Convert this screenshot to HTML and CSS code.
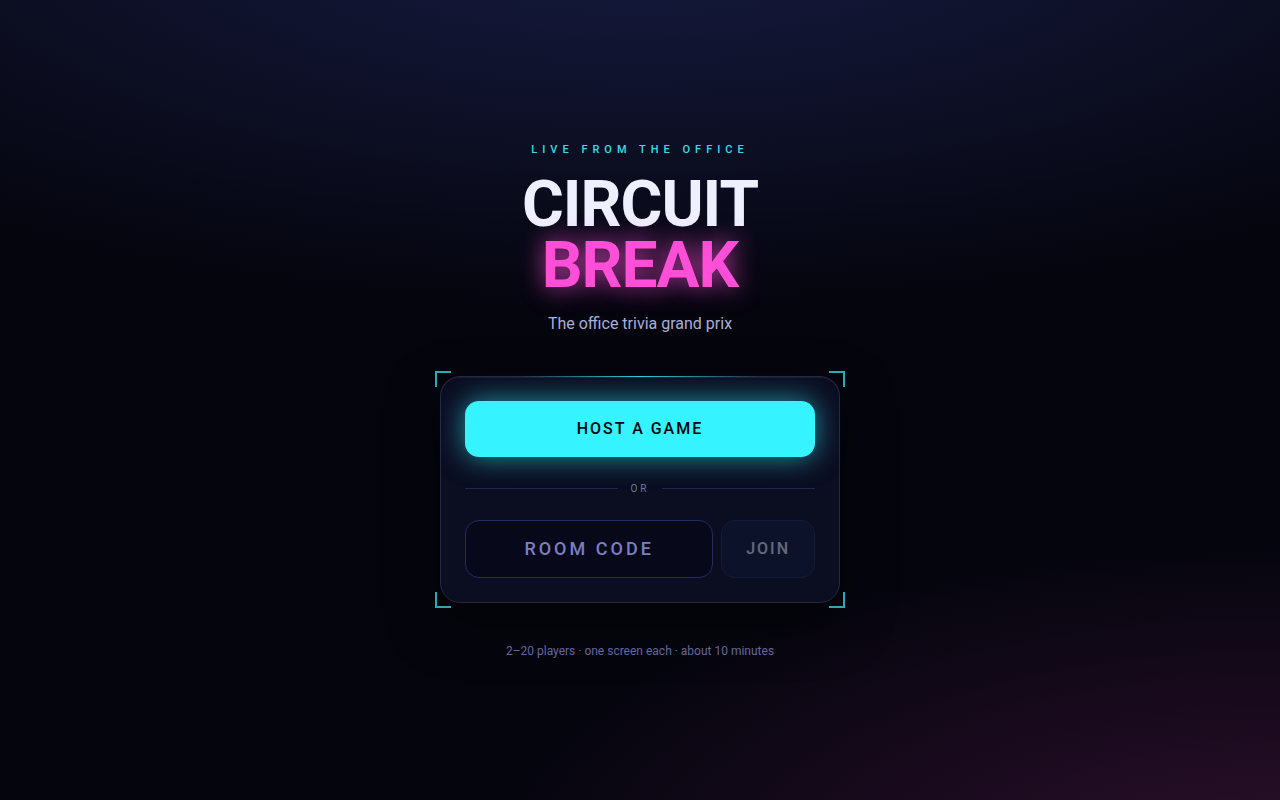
FILE: index.html
```
<!DOCTYPE html>
<html lang="en">
<head>
    <meta charset="UTF-8">
    <meta name="viewport" content="width=device-width, initial-scale=1.0">
    <title>Circuit Break</title>
    <link rel="stylesheet" href="styles.css">
</head>
<body>

    <main class="home">
        <!-- Title -->
        <header class="hero">
            <p class="eyebrow">Live from the office</p>
            <h1 class="title">Circuit <span class="title-accent">Break</span></h1>
            <p class="tagline">The office trivia grand prix</p>
        </header>

        <!-- Host / join card -->
        <section class="card">
            <span class="corner top-left"></span>
            <span class="corner top-right"></span>
            <span class="corner bottom-left"></span>
            <span class="corner bottom-right"></span>

            <button class="host-btn" type="button">Host a game</button>

            <div class="divider">Or</div>

            <form class="join-form">
                <input class="code-input" type="text" placeholder="ROOM CODE" aria-label="Room code" maxlength="4" autocomplete="off">
                <button class="join-btn" type="submit" disabled>Join</button>
            </form>
        </section>

        <p class="footnote">2–20 players · one screen each · about 10 minutes</p>
    </main>

</body>
</html>
```
FILE: styles.css
```
* {
    margin: 0;
    padding: 0;
    box-sizing: border-box;
    font-family: Roboto, sans-serif;
}

body {
    min-height: 100vh;
    color: #eef0ff;
    background-color: #05050e;
    background-image:
        radial-gradient(90% 60% at 100% 110%, #2e102d, transparent 70%),
        radial-gradient(140% 80% at 50% -10%, #171c42, transparent 60%);
    background-repeat: no-repeat;
}

.home {
    min-height: 100vh;
    padding: 24px;
    display: flex;
    flex-direction: column;
    align-items: center;
    justify-content: center;
}

.hero {
    text-align: center;
    margin-bottom: 40px;
}

.eyebrow,
.title,
.host-btn,
.join-btn,
.code-input,
.divider {
    text-transform: uppercase;
}

.eyebrow {
    font-size: 11px;
    line-height: 16px;
    font-weight: 500;
    letter-spacing: 5px;
    color: #35f3ff;
    opacity: 0.9;
    margin-bottom: 16px;
}

.title {
    font-size: 64px;
    line-height: 61px;
    font-weight: 700;
    letter-spacing: -1px;
    margin-bottom: 16px;
}

.title-accent {
    display: block;
    color: #ff4fd8;
    text-shadow: 0 0 24px rgba(255, 79, 216, 0.8);
}

.tagline {
    font-size: 16px;
    line-height: 24px;
    color: #a9aed8;
}

.card {
    position: relative;
    width: 100%;
    max-width: 400px;
    padding: 24px;
    border: 1px solid #262740;
    border-radius: 20px;
    background: #0b0d21;
    box-shadow: 0 20px 50px rgba(0, 0, 0, 0.5), inset 0 1px 0 rgba(255, 255, 255, 0.06);
}

/* glowing top edge */
.card::before {
    content: "";
    position: absolute;
    top: -1px;
    left: 20%;
    right: 20%;
    height: 1px;
    background: linear-gradient(90deg, transparent, #35f3ff, transparent);
    opacity: 0.8;
}

.corner {
    position: absolute;
    width: 16px;
    height: 16px;
    border: 0 solid #35f3ff;
    opacity: 0.7;
}

.top-left {
    top: -6px;
    left: -6px;
    border-width: 2px 0 0 2px;
}

.top-right {
    top: -6px;
    right: -6px;
    border-width: 2px 2px 0 0;
}

.bottom-left {
    bottom: -6px;
    left: -6px;
    border-width: 0 0 2px 2px;
}

.bottom-right {
    bottom: -6px;
    right: -6px;
    border-width: 0 2px 2px 0;
}

.host-btn {
    display: block;
    width: 100%;
    height: 56px;
    border: none;
    border-radius: 14px;
    background: #35f3ff;
    color: #04040c;
    font-size: 16px;
    font-weight: 500;
    letter-spacing: 2px;
    cursor: pointer;
    box-shadow: 0 0 28px rgba(53, 243, 255, 0.6);
}

.divider {
    display: flex;
    align-items: center;
    gap: 12px;
    margin: 24px 0;
    font-size: 10px;
    line-height: 15px;
    letter-spacing: 3px;
    color: #7377b0;
}

.divider::before,
.divider::after {
    content: "";
    flex: 1;
    height: 1px;
    background: #23254d;
}

.join-form {
    display: flex;
    gap: 8px;
}

.code-input {
    flex: 1;
    min-width: 0;
    height: 58px;
    padding: 0 16px;
    border: 1px solid #262a5c;
    border-radius: 14px;
    background: #08081b;
    color: #eef0ff;
    font-size: 18px;
    font-weight: 500;
    letter-spacing: 3px;
    text-align: center;
    outline: none;
}

.code-input::placeholder {
    color: #7b7fc0;
}

.code-input:focus {
    border-color: #35f3ff;
}

.join-btn {
    padding: 0 24px;
    border: 1px solid #262f60;
    border-radius: 14px;
    background: #0f1a36;
    color: #eef0ff;
    font-size: 16px;
    font-weight: 500;
    letter-spacing: 2px;
}

.join-btn:disabled {
    opacity: 0.4;
}

.footnote {
    margin-top: 40px;
    font-size: 12px;
    line-height: 16px;
    color: #6b6fa8;
}
```
